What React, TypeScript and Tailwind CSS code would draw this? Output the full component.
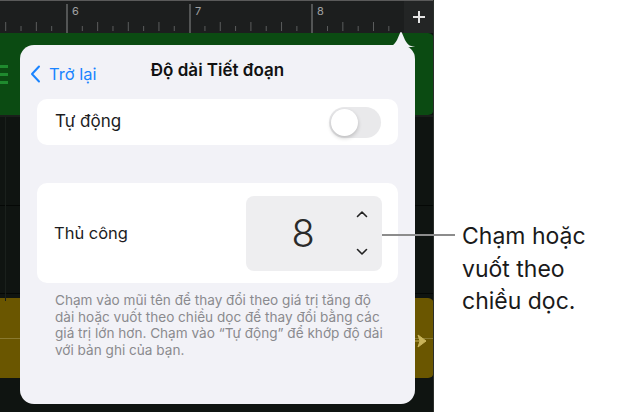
import React from 'react';

const font = { fontFamily: 'Inter, "Noto Sans", sans-serif' };

function Ruler() {
  const ticks: { x: number; tall: boolean }[] = [];
  const step = 122.6 / 8;
  for (let i = -4; i < 24; i++) {
    const x = 67 + i * step;
    if (x < 2 || x > 402) continue;
    if (i % 8 === 0) continue;
    ticks.push({ x, tall: i % 2 === 0 });
  }
  const majors = [
    { x: 67, label: '6' },
    { x: 190, label: '7' },
    { x: 312, label: '8' },
  ];
  return (
    <div className="relative h-[33px] shrink-0 border-t border-[#5a5a5a] bg-[#1c1e1e]">
      <svg className="absolute inset-0" width="434" height="33">
        {ticks.map((t, i) => (
          <line key={i} x1={t.x} x2={t.x} y1={t.tall ? 21 : 25} y2={30} stroke="#5b5d5d" strokeWidth="1" />
        ))}
        {majors.map((m) => (
          <g key={m.label}>
            <line x1={m.x} x2={m.x} y1={3} y2={33} stroke="#8a8c8c" strokeWidth="1" />
            <text x={m.x + 5} y={14} fill="#a0a2a2" fontSize="11" fontFamily="Inter, sans-serif">
              {m.label}
            </text>
          </g>
        ))}
      </svg>
      <div className="absolute right-0 top-0 flex h-[32px] w-[30px] items-center justify-center bg-[#232525]">
        <svg width="14" height="14" viewBox="0 0 14 14">
          <path d="M7 1v12M1 7h12" stroke="#e5e5e5" strokeWidth="2" />
        </svg>
      </div>
    </div>
  );
}

function Chevron({ up }: { up?: boolean }) {
  return (
    <svg width="12" height="8" viewBox="0 0 12 8">
      <path d={up ? 'M1.5 6.5L6 2l4.5 4.5' : 'M1.5 1.5L6 6l4.5-4.5'} fill="none" stroke="#222" strokeWidth="1.6" strokeLinecap="round" strokeLinejoin="round" />
    </svg>
  );
}

function Popover() {
  return (
    <div className="absolute left-[20px] top-[45px] h-[359px] w-[395px] rounded-[14px] bg-[#f2f2f7]">
      <svg className="absolute -top-[14px] left-[364px]" width="34" height="16" viewBox="0 0 34 16">
        <path d="M0 16 C8 16 10 14 13 9 L16 2 Q17 0 18 2 L21 9 C24 14 26 16 34 16 Z" fill="#f2f2f7" />
      </svg>
      <div className="relative flex h-[54px] items-center justify-center pb-[2px]">
        <div className="absolute left-[10px] top-[17px] flex items-center gap-[8px] text-[16.5px] text-[#1a84ff]">
          <svg width="11" height="18" viewBox="0 0 11 18">
            <path d="M9 1.5L2 9l7 7.5" fill="none" stroke="#1a84ff" strokeWidth="2" strokeLinecap="round" strokeLinejoin="round" />
          </svg>
          <span>Trở lại</span>
        </div>
        <span className="text-[17px] font-semibold text-[#111]">Độ dài Tiết đoạn</span>
      </div>
      <div className="mx-[17px] flex h-[46px] items-center justify-between rounded-[10px] bg-white pl-[18px] pr-[17px]">
        <span className="text-[17px] text-[#1c1c1e]">Tự động</span>
        <div className="flex h-[31px] w-[52px] items-center rounded-full bg-[#e9e9eb] p-[2px]">
          <div className="h-[27px] w-[27px] rounded-full bg-white shadow-[0_2px_4px_rgba(0,0,0,0.2)]" />
        </div>
      </div>
      <div className="mx-[17px] mt-[38px] flex h-[100px] items-center justify-between rounded-[10px] bg-white pl-[17px] pr-[16px]">
        <span className="text-[16.5px] text-[#1c1c1e]">Thủ công</span>
        <div className="flex h-[75px] w-[136px] items-center rounded-[8px] bg-[#eeeef0]">
          <span className="flex-1 pl-[16px] text-center text-[38px] font-light text-[#2a2a2a]">8</span>
          <div className="flex w-[38px] flex-col items-center gap-[30px] pr-[2px]">
            <Chevron up />
            <Chevron />
          </div>
        </div>
      </div>
      <p className="mt-[9px] w-[364px] pl-[35px] text-[13.6px] leading-[16.6px] text-[#8a8a8e]">
        Chạm vào mũi tên để thay đổi theo giá trị tăng độ dài hoặc vuốt theo chiều dọc để thay đổi bằng các giá trị lớn hơn. Chạm vào “Tự động” để khớp độ dài với bản ghi của bạn.
      </p>
    </div>
  );
}

export default function App() {
  return (
    <div className="relative flex h-[412px] w-[622px] overflow-hidden bg-white" style={font}>
      <div className="relative flex h-full w-[434px] shrink-0 flex-col bg-[#0f1411]">
        <Ruler />
        <div className="relative flex h-[82px] shrink-0 flex-col justify-center gap-[5px] rounded-r-[6px] bg-[#0b4b12]">
          <div className="h-[3px] w-[8px] bg-[#1f8a2e]" />
          <div className="h-[3px] w-[8px] bg-[#1f8a2e]" />
          <div className="h-[3px] w-[8px] bg-[#1f8a2e]" />
        </div>
        <div className="h-[2px] shrink-0 bg-[#1a1f1b]" />
        <div className="h-[89px] shrink-0 border-b border-[#050806]" />
        <div className="h-[88px] shrink-0 border-b border-[#050806]" />
        <div className="h-[4px] shrink-0" />
        <div className="relative flex h-[80px] shrink-0 items-center rounded-r-[6px] bg-[#6a5600]">
          <div className="h-[1px] w-full bg-[#8a7a30]" />
          <svg className="absolute right-[6px] top-[36px]" width="16" height="14" viewBox="0 0 16 14">
            <path d="M2 7 L14 7 M6 1 L14 7 L6 13 L8 7 Z" fill="#c9b45a" stroke="#c9b45a" strokeWidth="1" />
          </svg>
        </div>
        <div className="flex-1" />
        <div className="absolute left-[5px] top-[117px] h-[184px] w-[1px] bg-[#1a201c]" />
        <div className="absolute right-0 top-0 h-full w-[1px] bg-[#2a2e2b]" />
        <Popover />
      </div>
      <div className="absolute left-[382px] top-[234px] h-[2px] w-[73px] bg-[#8c8c8c]" />
      <div className="pl-[28px] pt-[220px] text-[23px] leading-[32.5px] text-[#1a1a1a]">
        Chạm hoặc
        <br />
        vuốt theo
        <br />
        chiều dọc.
      </div>
    </div>
  );
}
